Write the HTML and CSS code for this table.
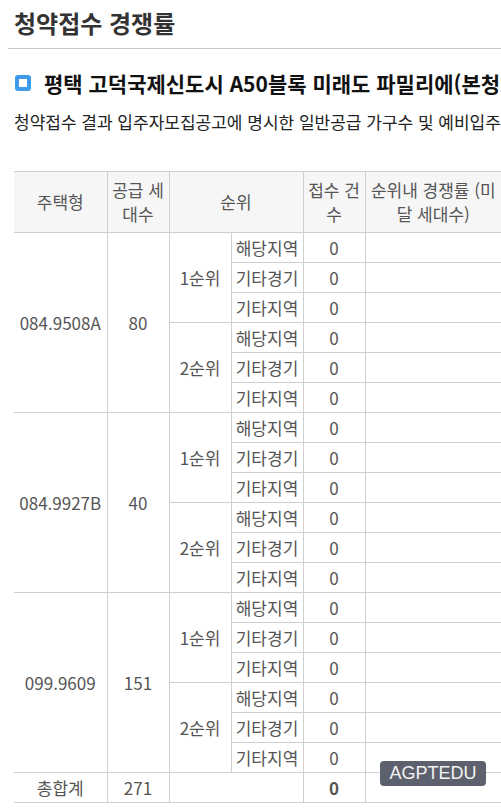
FILE: index.html
```html
<!DOCTYPE html>
<html lang="ko">
<head>
<meta charset="utf-8">
<title>청약접수 경쟁률</title>
<link rel="stylesheet" href="styles.css">
</head>
<body>
<div class="page">
  <h2 class="title">청약접수 경쟁률</h2>
  <h3 class="heading"><span class="icon"></span>평택 고덕국제신도시 A50블록 미래도 파밀리에(본청약)</h3>
  <p class="desc">청약접수 결과 입주자모집공고에 명시한 일반공급 가구수 및 예비입주자 모집 결과</p>
  <div class="table-wrap">
    <table class="result">
      <colgroup>
        <col class="c1"><col class="c2"><col class="c3"><col class="c4"><col class="c5"><col class="c6">
      </colgroup>
      <thead>
        <tr>
          <th>주택형</th>
          <th>공급 세<br>대수</th>
          <th colspan="2">순위</th>
          <th>접수 건<br>수</th>
          <th>순위내 경쟁률 (미<br>달 세대수)</th>
        </tr>
      </thead>
      <tbody>
        <tr><td rowspan="6">084.9508A</td><td rowspan="6">80</td><td rowspan="3">1순위</td><td>해당지역</td><td>0</td><td></td></tr>
        <tr><td>기타경기</td><td>0</td><td></td></tr>
        <tr><td>기타지역</td><td>0</td><td></td></tr>
        <tr><td rowspan="3">2순위</td><td>해당지역</td><td>0</td><td></td></tr>
        <tr><td>기타경기</td><td>0</td><td></td></tr>
        <tr><td>기타지역</td><td>0</td><td></td></tr>
        <tr><td rowspan="6">084.9927B</td><td rowspan="6">40</td><td rowspan="3">1순위</td><td>해당지역</td><td>0</td><td></td></tr>
        <tr><td>기타경기</td><td>0</td><td></td></tr>
        <tr><td>기타지역</td><td>0</td><td></td></tr>
        <tr><td rowspan="3">2순위</td><td>해당지역</td><td>0</td><td></td></tr>
        <tr><td>기타경기</td><td>0</td><td></td></tr>
        <tr><td>기타지역</td><td>0</td><td></td></tr>
        <tr><td rowspan="6">099.9609</td><td rowspan="6">151</td><td rowspan="3">1순위</td><td>해당지역</td><td>0</td><td></td></tr>
        <tr><td>기타경기</td><td>0</td><td></td></tr>
        <tr><td>기타지역</td><td>0</td><td></td></tr>
        <tr><td rowspan="3">2순위</td><td>해당지역</td><td>0</td><td></td></tr>
        <tr><td>기타경기</td><td>0</td><td></td></tr>
        <tr><td>기타지역</td><td>0</td><td></td></tr>
        <tr class="total"><td>총합계</td><td>271</td><td colspan="2"></td><td class="strong">0</td><td></td></tr>
      </tbody>
    </table>
    <div class="watermark">AGPTEDU</div>
  </div>
</div>
</body>
</html>
```
FILE: styles.css
```css
html, body {
  margin: 0;
  padding: 0;
  background: #fff;
}
body {
  width: 501px;
  overflow: hidden;
  font-family: "Noto Sans CJK KR", "Noto Sans", sans-serif;
  color: #333;
}
.page {
  padding-left: 8px;
}
.title {
  margin: 0;
  padding: 7px 6px 9px;
  font-size: 24px;
  line-height: 32px;
  font-weight: 600;
  color: #333;
  border-bottom: 1px solid #c8c8c8;
  white-space: nowrap;
}
.heading {
  margin: 20px 0 0 6px;
  font-size: 21px;
  line-height: 28px;
  font-weight: 700;
  color: #111;
  white-space: nowrap;
  display: flex;
  align-items: center;
}
.icon {
  flex: none;
  width: 8px;
  height: 8px;
  border: 4px solid #3d9be9;
  border-radius: 3px;
  background: #fff;
  margin: 0 13px 0 1px;
}
.desc {
  margin: 13px 0 0 6px;
  font-size: 17px;
  line-height: 24px;
  color: #222;
  white-space: nowrap;
}
.table-wrap {
  position: relative;
  margin: 37px 0 0 6px;
}
.result {
  border-collapse: collapse;
  table-layout: fixed;
  width: 487px;
  font-size: 17px;
  color: #555;
}
.c1 { width: 93px; }
.c2 { width: 62px; }
.c3 { width: 62px; }
.c4 { width: 72px; }
.c5 { width: 62px; }
.c6 { width: 136px; }
.result th,
.result td {
  border: 1px solid #cfcfcf;
  padding: 0;
  text-align: center;
  font-weight: 400;
  white-space: nowrap;
  overflow: hidden;
}
.result th:first-child,
.result td:first-child {
  border-left: none;
}
.result th:last-child,
.result td:last-child {
  border-right: none;
}
.result th {
  background: #f6f6f6;
  height: 60px;
  line-height: 24px;
  color: #555;
}
.result td {
  height: 29px;
  line-height: 20px;
}
.result .strong {
  font-weight: 700;
}
.watermark {
  position: absolute;
  left: 366px;
  top: 590px;
  width: 106px;
  height: 25px;
  background: #5d616d;
  color: #f2f2f2;
  font-family: "Liberation Sans", Arial, sans-serif;
  font-size: 18px;
  line-height: 25px;
  text-align: center;
  border-radius: 4px;
}
```
